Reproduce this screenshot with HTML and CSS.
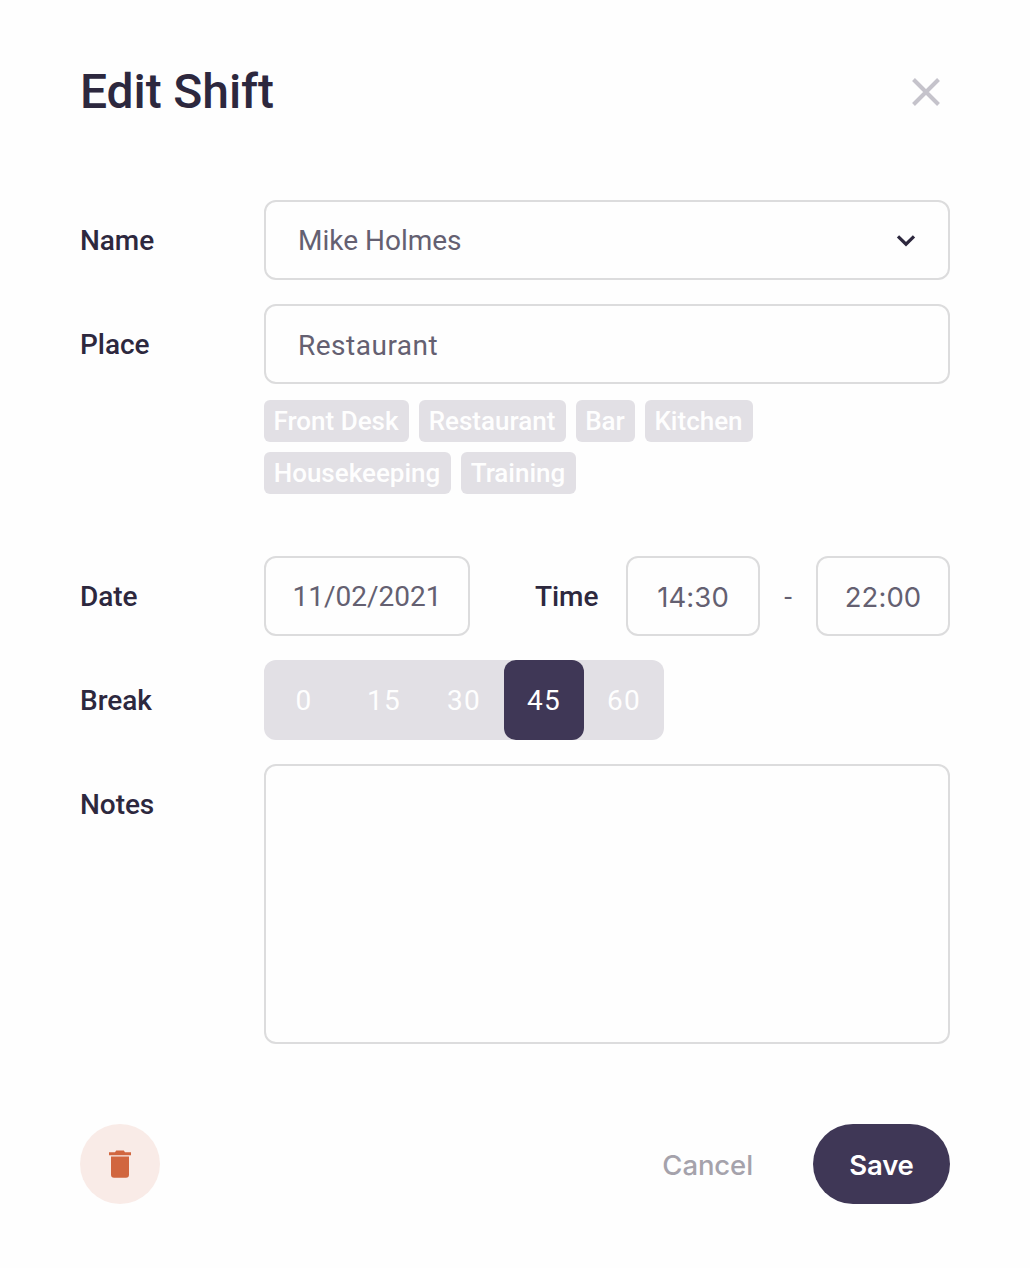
FILE: index.html
```html
<!DOCTYPE html>
<html lang="en">
<head>
<meta charset="utf-8">
<title>Edit Shift</title>
<link rel="stylesheet" href="styles.css">
</head>
<body>
<main class="dialog">
  <header class="header">
    <h1 class="title">Edit Shift</h1>
    <button class="close" type="button" aria-label="Close">
      <svg width="28" height="28" viewBox="0 0 28 28"><path d="M1.5 1.5 26.5 26.5M26.5 1.5 1.5 26.5" fill="none" stroke="#c5c3cb" stroke-width="4"/></svg>
    </button>
  </header>
  <form class="form">
    <div class="row">
      <span class="label">Name</span>
      <div class="field select"><span class="name-value">Mike Holmes</span>
        <svg width="20" height="14" viewBox="0 0 20 14"><path d="M2 3.3 10 11.2 18 3.3" fill="none" stroke="#2d283e" stroke-width="3.2"/></svg>
      </div>
    </div>
    <div class="row place-row">
      <span class="label">Place</span>
      <div class="place">
        <div class="field"><span class="place-value">Restaurant</span></div>
        <div class="tags">
          <span class="tag tag-desk">Front Desk</span>
          <span class="tag tag-restaurant">Restaurant</span>
          <span class="tag tag-bar">Bar</span>
          <span class="tag tag-kitchen">Kitchen</span>
          <span class="tag tag-house">Housekeeping</span>
          <span class="tag tag-training">Training</span>
        </div>
      </div>
    </div>
    <div class="row when-row">
      <span class="label">Date</span>
      <div class="field date"><span class="date-value">11/02/2021</span></div>
      <span class="label time-label">Time</span>
      <div class="field time"><span class="time-value">14:30</span></div>
      <span class="dash">-</span>
      <div class="field time"><span class="time-value">22:00</span></div>
    </div>
    <div class="row">
      <span class="label">Break</span>
      <div class="segments">
        <span class="segment">0</span>
        <span class="segment">15</span>
        <span class="segment">30</span>
        <span class="segment active">45</span>
        <span class="segment">60</span>
      </div>
    </div>
    <div class="row">
      <span class="label">Notes</span>
      <div class="notes"></div>
    </div>
  </form>
  <footer class="footer">
    <button class="delete" type="button" aria-label="Delete">
      <svg width="22" height="28" viewBox="0 0 22 28" fill="#d1663f"><path d="M0 2.2H6L7.2.5H14.8L16 2.2H22V5.2H0Z"/><path d="M2 6.5H20V24.5Q20 27.7 17 27.7H5Q2 27.7 2 24.5Z"/></svg>
    </button>
    <button class="cancel" type="button">Cancel</button>
    <button class="save" type="button">Save</button>
  </footer>
</main>
</body>
</html>
```
FILE: styles.css
```css
* { box-sizing: border-box; }
body { margin: 0; background: #fefefe; font-family: Roboto, sans-serif; color: #2d283e; }
button { margin: 0; padding: 0; border: 0; background: none; font: inherit; }
svg { display: block; }
.dialog { width: 1030px; height: 1268px; padding: 60px 80px 64px; display: flex; flex-direction: column; overflow: hidden; }
.header { height: 64px; margin-bottom: 76px; display: flex; align-items: center; justify-content: space-between; }
.title { margin: 0; font-size: 48px; font-weight: 500; line-height: 64px; letter-spacing: -.1px; }
.close { margin-right: 10px; }
.form { display: flex; flex-direction: column; gap: 24px; }
.row { display: flex; align-items: flex-start; }
.label { width: 184px; flex: none; font-size: 28px; font-weight: 500; line-height: 82px; height: 80px; letter-spacing: -.05px; }
.field { height: 80px; border: 2px solid #dcdcdd; border-radius: 12px; padding: 0 32px; display: flex; align-items: center; font-size: 28px; color: #646071; }
.select { flex: 1; justify-content: space-between; }
.place { flex: 1; }
.place-row { min-height: 228px; }
.place-value { letter-spacing: .5px; padding-top: 2px; }
.tags { margin-top: 16px; display: flex; flex-wrap: wrap; gap: 10px; width: 500px; }
.tag { height: 42px; padding-right: 1px; border-radius: 6px; background: #e2e0e5; color: #fefefe; font-size: 26px; font-weight: 500; line-height: 42px; text-align: center; white-space: nowrap; }
.tag-desk { width: 145px; }
.tag-restaurant { width: 147px; }
.tag-bar { width: 59px; }
.tag-kitchen { width: 108px; }
.tag-house { width: 187px; }
.tag-training { width: 115px; }
.date, .time { padding: 0; justify-content: center; }
.date { width: 206px; }
.time { width: 134px; }
.time-value { padding-top: 2px; font-family: Inter, sans-serif; font-size: 27.5px; letter-spacing: .1px; }
.time-label { width: 91px; margin-left: 65px; }
.dash { width: 56px; height: 80px; text-align: center; font-size: 28px; line-height: 82px; color: #646071; }
.segments { width: 400px; height: 80px; display: flex; border-radius: 12px; background: #e2e0e5; }
.segment { width: 80px; height: 80px; line-height: 82px; text-align: center; font-size: 28px; letter-spacing: 1.3px; color: #fefefe; }
.active { border-radius: 12px; background: #3f3756; }
.notes { flex: 1; height: 280px; border: 2px solid #dcdcdd; border-radius: 12px; }
.footer { margin-top: auto; height: 80px; display: flex; align-items: center; }
.delete { width: 80px; height: 80px; border-radius: 50%; background: #f9ebe7; display: flex; align-items: center; justify-content: center; }
.cancel, .save { font-family: Inter, sans-serif; font-size: 27.5px; letter-spacing: -.1px; }
.cancel { margin-left: auto; margin-right: 60px; padding-top: 2px; color: #a5a2ab; font-weight: 500; }
.save { width: 137px; height: 80px; padding-top: 2px; border-radius: 40px; background: #3f3756; color: #fff; font-weight: 600; letter-spacing: -.2px; }
```
